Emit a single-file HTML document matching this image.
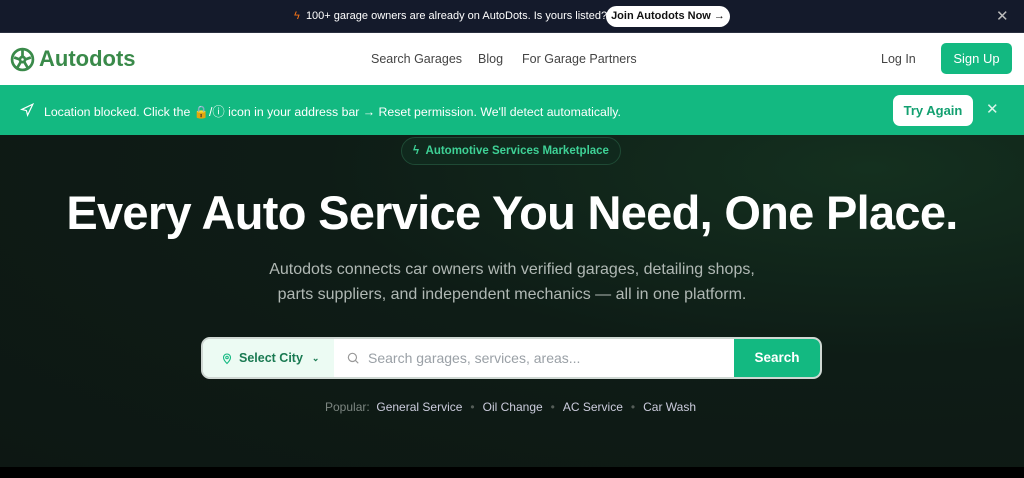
<!DOCTYPE html>
<html><head><meta charset="utf-8"><style>
*{margin:0;padding:0;box-sizing:border-box}
body{width:1024px;height:478px;overflow:hidden;font-family:"Liberation Sans",sans-serif;background:#000;position:relative}
.top{position:absolute;top:0;left:0;width:1024px;height:33px;background:#141a2b;border-bottom:1px solid #2a3040;color:#fff;font-size:11px}
.top .t{position:absolute;left:294px;top:10px;white-space:nowrap}
.top .b{position:absolute;left:606px;top:6px;width:124px;height:21px;background:#fff;border-radius:11px;color:#111;font-size:11px;font-weight:bold;line-height:21px;text-align:center;white-space:nowrap}
.top .x{position:absolute;left:996px;top:7px;color:#bbb;font-size:15px}
.nav{position:absolute;top:33px;left:0;width:1024px;height:52px;background:#fff}
.logo{position:absolute;left:10px;top:13px;display:flex;align-items:center;color:#3a8a4a;font-weight:bold;font-size:22px}
.nav a{position:absolute;top:19px;font-size:12.5px;color:#444}
.su{position:absolute;left:941px;top:10px;width:71px;height:31px;background:#13b981;border-radius:5px;color:#fff;font-size:13px;text-align:center;line-height:31px}
.loc{position:absolute;top:85px;left:0;width:1024px;height:50px;background:#13b981;color:#fff;font-size:12.3px}
.loc .t{position:absolute;left:44px;top:17px;white-space:nowrap}
.loc .ta{position:absolute;left:893px;top:10px;width:80px;height:31px;background:#fff;border-radius:7px;color:#13a070;font-weight:bold;font-size:13px;text-align:center;line-height:31px}
.loc .x{position:absolute;left:986px;top:15px;font-size:15px;color:#d9f5ea}
.hero{position:absolute;top:135px;left:0;width:1024px;height:332px;background:radial-gradient(ellipse at 85% 10%,#14301f 0%,#0e1c16 45%,#0d1713 100%)}
.pill{position:absolute;left:401px;top:2px;width:220px;height:28px;border:1px solid #1f4a35;background:#10291d;border-radius:14px;color:#3ed196;font-size:11.5px;font-weight:bold;line-height:27px;text-align:center}
h1{position:absolute;top:50px;left:0;width:1024px;text-align:center;color:#fff;font-size:47px;letter-spacing:-0.7px;white-space:nowrap}
.sub{position:absolute;top:122px;left:0;width:1024px;text-align:center;color:#b0b8b4;font-size:16px;line-height:25px}
.sb{position:absolute;left:201px;top:202px;width:621px;height:42px;border-radius:9px;background:#fff;overflow:hidden;border:2px solid #cfd8d3;display:flex}
.city{width:131px;background:#ecfbf3;color:#1a7a52;font-size:12.5px;font-weight:bold;display:flex;align-items:center;padding-left:18px;gap:6px}
.inp{flex:1;color:#9aa0a6;font-size:14px;display:flex;align-items:center;padding-left:12px;gap:8px}
.go{width:86px;background:#13b981;color:#fff;font-weight:bold;font-size:13.5px;text-align:center;line-height:38px}
.pop{position:absolute;top:265px;left:325px;font-size:12px;color:#ccd;white-space:nowrap}
.pop span.l{color:#7d8681}.pop i{font-style:normal;color:#555d58;margin:0 8px}
</style></head><body>
<div class="top"><span class="t"><span style="color:#f97316">ϟ</span>&nbsp; 100+ garage owners are already on AutoDots. Is yours listed?</span><div class="b">Join Autodots Now →</div><span class="x">✕</span></div>
<div class="nav"><div class="logo"><svg width="25" height="25" viewBox="0 0 24 24" fill="none" stroke="#3a8a4a" stroke-width="2.6"><circle cx="12" cy="12" r="10"/><path d="M12 3v6M4 10l5.5 2M20 10l-5.5 2M7 20l3.5-6M17 20l-3.5-6"/><circle cx="12" cy="12" r="2.5"/></svg><span style="margin-left:4px">Autodots</span></div>
<a style="left:371px">Search Garages</a><a style="left:478px">Blog</a><a style="left:522px">For Garage Partners</a><a style="left:881px">Log In</a><div class="su">Sign Up</div></div>
<div class="loc"><svg style="position:absolute;left:20px;top:18px" width="14" height="14" viewBox="0 0 24 24" fill="none" stroke="#fff" stroke-width="2"><path d="M3 11l19-9-9 19-2-8z"/></svg><span class="t">Location blocked. Click the 🔒/ⓘ icon in your address bar → Reset permission. We'll detect automatically.</span><div class="ta">Try Again</div><span class="x">✕</span></div>
<div class="hero"><div class="pill">ϟ&nbsp; Automotive Services Marketplace</div>
<h1>Every Auto Service You Need, One Place.</h1>
<div class="sub">Autodots connects car owners with verified garages, detailing shops,<br>parts suppliers, and independent mechanics — all in one platform.</div>
<div class="sb"><div class="city"><svg width="12" height="13" viewBox="0 0 24 24" fill="none" stroke="#13b981" stroke-width="2.2"><path d="M12 22s7-7 7-12a7 7 0 0 0-14 0c0 5 7 12 7 12z"/><circle cx="12" cy="10" r="2.5"/></svg>Select City <span style="font-size:9px;margin-left:3px">⌄</span></div>
<div class="inp"><svg width="14" height="14" viewBox="0 0 24 24" fill="none" stroke="#999" stroke-width="2"><circle cx="11" cy="11" r="7"/><path d="M16 16l5 5"/></svg>Search garages, services, areas...</div><div class="go">Search</div></div>
<div class="pop"><span class="l">Popular:</span>&nbsp; General Service<i>•</i>Oil Change<i>•</i>AC Service<i>•</i>Car Wash</div>
</div>
</body></html>
